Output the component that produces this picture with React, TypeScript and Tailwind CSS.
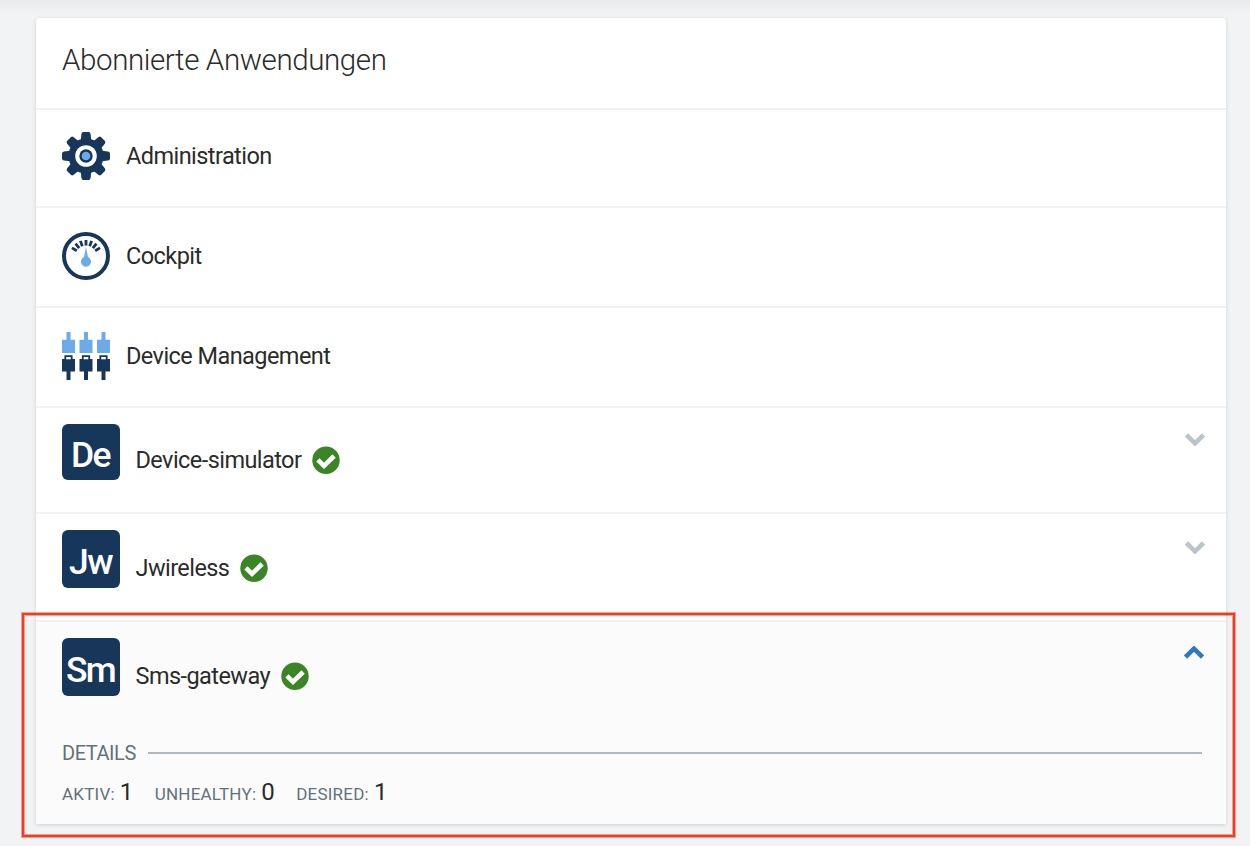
import React from "react";

const NAVY = "#17375a";
const SKY = "#6caae8";

function GearIcon() {
  const angles = [0, 45, 90, 135, 180, 225, 270, 315];
  return (
    <svg width="48" height="48" viewBox="0 0 48 48" className="block">
      <g fill={NAVY}>
        {angles.map((a) => (
          <path
            key={a}
            d="M18.6 10 L19.4 2 Q19.6 0 21.5 0 H26.5 Q28.4 0 28.6 2 L29.4 10 Z"
            transform={`rotate(${a} 24 24)`}
          />
        ))}
        <circle cx="24" cy="24" r="17.6" />
      </g>
      <circle cx="24" cy="24" r="10.8" fill="#fff" />
      <circle cx="24" cy="24" r="6.7" fill={NAVY} />
      <circle cx="24" cy="24" r="4.3" fill={SKY} />
    </svg>
  );
}

function GaugeIcon() {
  const ticks = [-59, -39.5, -20, 0, 20, 39.5, 59];
  return (
    <svg width="48" height="48" viewBox="0 0 48 48" className="block">
      <circle cx="24" cy="24" r="22" fill="#fff" stroke={NAVY} strokeWidth="4" />
      {ticks.map((a) => (
        <path key={a} d="M24 7.9 V13.6" stroke={NAVY} strokeWidth="2.8" transform={`rotate(${a} 24 24.3)`} />
      ))}
      <path d="M24 15 L26 25.1 A5 5 0 1 1 22 25.1 Z" fill={SKY} />
    </svg>
  );
}

function PlugsIcon() {
  return (
    <svg width="48" height="48" viewBox="0 0 48 48" className="block">
      {[0, 17.5, 35].map((x) => (
        <g key={x} transform={`translate(${x} 0)`}>
          <path d="M4.5 0 H8.5 V7.8 H13 V21 H0 V7.8 H4.5 Z" fill={SKY} />
          <path d="M0 27 H2.4 V23.3 H10.6 V27 H13 V39.5 H8.5 V48 H4.5 V39.5 H0 Z" fill={NAVY} />
          <path d="M4.2 25 H8.8 V27.3 H4.2 Z" fill="#fff" />
        </g>
      ))}
    </svg>
  );
}

function CheckBadge() {
  return (
    <svg width="28" height="28" viewBox="0 0 28 28" className="block shrink-0">
      <circle cx="14" cy="14.2" r="13.7" fill="#3b8526" />
      <path d="M5.9 13.9 L12 19.8 L22.1 10" fill="none" stroke="#fff" strokeWidth="4.6" />
    </svg>
  );
}

function Chevron({ open = false }: { open?: boolean }) {
  return (
    <svg width="20" height="13" viewBox="0 0 20 13" className="block shrink-0">
      <path
        d={open ? "M1.5 11.1 L10 2.7 L18.5 11.1" : "M1.5 1.9 L10 10.3 L18.5 1.9"}
        fill="none"
        stroke={open ? "#3276bb" : "#b9c4cd"}
        strokeWidth="4.6"
      />
    </svg>
  );
}

function AppRow({ icon, name, height }: { icon: React.ReactNode; name: string; height: string }) {
  return (
    <li className={`flex items-start border-b-2 border-[#f1f1f1] px-[26px] ${height}`}>
      {icon}
      <span className="ml-4 leading-[49px]">{name}</span>
    </li>
  );
}

function ServiceHead({ short, name, tile, label }: { short: string; name: string; tile: string; label: string }) {
  return (
    <div className="flex items-start">
      <div className={`flex w-[58px] items-center justify-center rounded-[6px] bg-[#17375a] pt-[8px] pr-[1px] text-[35.5px] font-medium tracking-[-1.6px] text-white ${tile}`}>
        {short}
      </div>
      <div className={`ml-[15.5px] flex items-center gap-[10.5px] leading-[28px] ${label}`}>
        <span>{name}</span>
        <CheckBadge />
      </div>
    </div>
  );
}

function Stat({ label, value }: { label: string; value: number }) {
  return (
    <div className="flex items-baseline gap-[5px]">
      <span className="text-[17px] font-normal tracking-[0.22px] text-[#63717c]">{label}:</span>
      <span className="text-[24px] leading-[28px]">{value}</span>
    </div>
  );
}

export default function App() {
  return (
    <div className="relative h-[846px] w-[1250px] overflow-hidden bg-[#f1f3f5] bg-[linear-gradient(#e9ebed_0,#f1f3f5_16px)] pt-[18px] pl-9 font-[Roboto,sans-serif] text-[23.5px] font-[450] tracking-[-0.56px] text-[#2b2b2b]">
      <section className="h-[806px] w-[1190px] overflow-hidden rounded-t-[4px] bg-white shadow-[0_1px_4px_rgba(0,0,0,0.15)]">
        <h1 className="h-[92px] border-b-2 border-[#f1f1f1] px-[26px] pt-[22px] text-[29.5px] leading-[40px] font-[350] tracking-[-0.4px]">
          Abonnierte Anwendungen
        </h1>
        <ul>
          <AppRow icon={<GearIcon />} name="Administration" height="h-[98px] pt-[22px]" />
          <AppRow icon={<GaugeIcon />} name="Cockpit" height="h-[100px] pt-[24px]" />
          <AppRow icon={<PlugsIcon />} name="Device Management" height="h-[100px] pt-[24px]" />
          <li className="flex h-[106px] justify-between border-b-2 border-[#f1f1f1] pt-4 pr-[21px] pl-[26px]">
            <ServiceHead short="De" name="Device-simulator" tile="h-[56px]" label="mt-[22px]" />
            <div className="pt-[9px]"><Chevron /></div>
          </li>
          <li className="flex h-[108px] justify-between border-b-2 border-[#f1f1f1] pt-4 pr-[21px] pl-[26px]">
            <ServiceHead short="Jw" name="Jwireless" tile="h-[58px]" label="mt-[24px]" />
            <div className="pt-[11px]"><Chevron /></div>
          </li>
          <li className="h-[202px] bg-[#fbfbfb] pt-4 pl-[26px]">
            <div className="flex justify-between pr-[22px]">
              <ServiceHead short="Sm" name="Sms-gateway" tile="h-[58px]" label="mt-[24px]" />
              <div className="pt-[8px]"><Chevron open /></div>
            </div>
            <div className="mt-[43px] mr-6 flex items-center gap-3 text-[20px] leading-[28px] tracking-[-0.45px] text-[#63717c]">
              <span>DETAILS</span>
              <span className="h-[2px] flex-1 bg-[#b0b7bd]" />
            </div>
            <div className="mt-[11px] flex gap-[22px]">
              <Stat label="AKTIV" value={1} />
              <Stat label="UNHEALTHY" value={0} />
              <Stat label="DESIRED" value={1} />
            </div>
          </li>
        </ul>
      </section>
      <div className="pointer-events-none absolute top-[613px] left-[22px] h-[224px] w-[1213px] border-2 border-[#ee3d23] shadow-[0_0_0_1px_rgba(238,90,60,0.55),inset_0_0_0_1px_rgba(238,90,60,0.55)]" />
    </div>
  );
}
